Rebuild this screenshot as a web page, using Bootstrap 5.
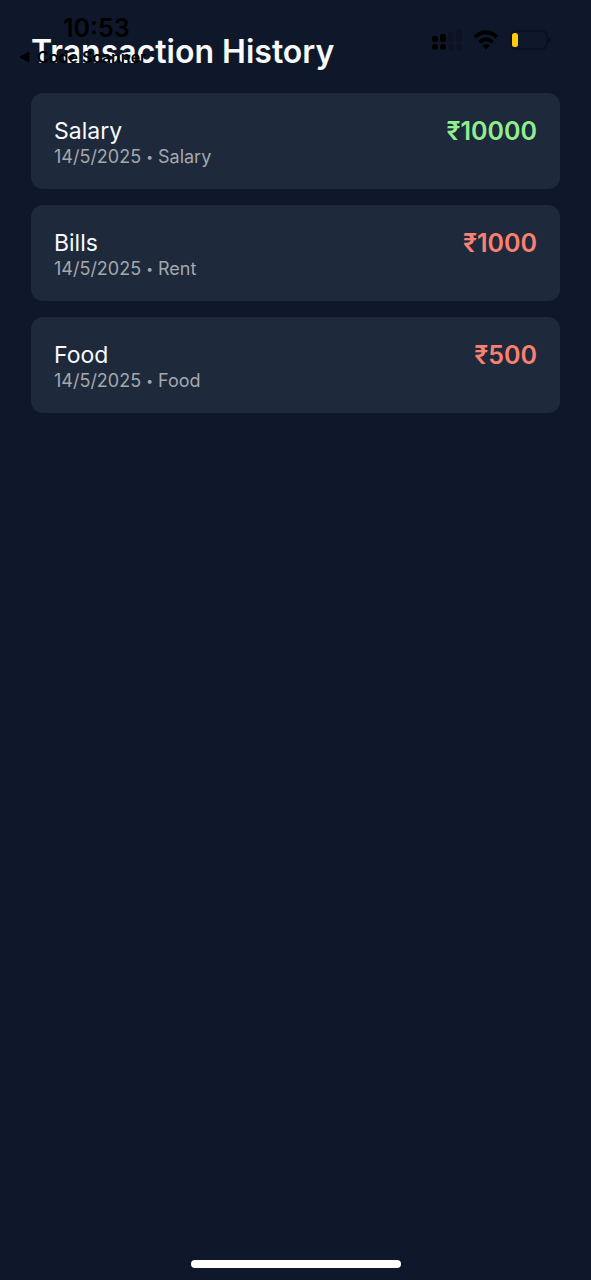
<!DOCTYPE html>
<html lang="en">
<head>
<meta charset="utf-8">
<meta name="viewport" content="width=device-width, initial-scale=1">
<title>Transaction History</title>
<link href="https://cdn.jsdelivr.net/npm/bootstrap@5.3.0/dist/css/bootstrap.min.css" rel="stylesheet">
<style>
  body { background: #0f172a; color: #f8fafc; font-family: Inter, "Noto Sans", sans-serif; }
  .screen { padding: 32px 31px 0; }
  .screen-title { font-size: 32px; line-height: 40px; font-weight: 600; margin-bottom: 21px; }
  .entry { background: #1e293b; border: 0; border-radius: 12px; color: inherit; padding: 24px 23px 20px; }
  .entry-name { font-size: 23px; line-height: 28px; }
  .entry-meta { font-size: 18px; line-height: 24px; color: #a4a8ae; }
  .dot { font-size: 12px; line-height: 1; vertical-align: 2px; }
  .amount { font-size: 25px; line-height: 28px; font-weight: 600; }
  .income { color: #90ee90; }
  .expense { color: #fa8072; }
  /* The translucent system bar lies over the page heading */
  .status-bar { height: 72px; color: #000; pointer-events: none; }
  .status-left { padding: 13px 0 0 19px; }
  .clock { font-size: 25px; line-height: 30px; font-weight: 600; padding-left: 44px; }
  .back-link { font-size: 16px; line-height: 28px; font-weight: 600; color: #000; text-decoration: none; gap: 7px; }
  .status-icons { padding: 25px 40px 0 0; gap: 11px; height: 54px; }
  .home-bar { width: 210px; height: 8px; background: #fff; }
</style>
</head>
<body class="position-relative min-vh-100 d-flex flex-column">
  <main class="screen flex-grow-1">
    <h1 class="screen-title">Transaction History</h1>
    <div class="d-flex flex-column gap-3">
      <article class="card entry flex-row justify-content-between align-items-start">
        <div><div class="entry-name">Salary</div><div class="entry-meta">14/5/2025 <span class="dot">•</span> Salary</div></div>
        <div class="amount income">₹10000</div>
      </article>
      <article class="card entry flex-row justify-content-between align-items-start">
        <div><div class="entry-name">Bills</div><div class="entry-meta">14/5/2025 <span class="dot">•</span> Rent</div></div>
        <div class="amount expense">₹1000</div>
      </article>
      <article class="card entry flex-row justify-content-between align-items-start">
        <div><div class="entry-name">Food</div><div class="entry-meta">14/5/2025 <span class="dot">•</span> Food</div></div>
        <div class="amount expense">₹500</div>
      </article>
    </div>
  </main>

  <div class="status-bar position-absolute top-0 start-0 w-100 d-flex justify-content-between align-items-start">
    <div class="status-left">
      <div class="clock">10:53</div>
      <a class="back-link d-flex align-items-center" href="#">
        <svg width="11" height="12" viewBox="0 0 11 12" aria-hidden="true"><path d="M10 1v10L1 6z" stroke="#000" stroke-linejoin="round"/></svg>
        <span>Code Scanner</span>
      </a>
    </div>
    <div class="status-icons d-flex align-items-center">
      <svg width="30" height="22" viewBox="0 0 30 22" aria-label="Signal">
        <g fill="#000"><rect x="0" y="7" width="6" height="6" rx="2"/><rect x="8" y="5" width="6" height="8" rx="2"/><rect x="0" y="15" width="6" height="6" rx="2.500"/><rect x="8" y="15" width="6" height="6" rx="2.500"/></g>
        <g fill="#0c1323"><rect x="16" y="3" width="6" height="10" rx="2"/><rect x="24" y="0" width="6" height="13" rx="2"/><rect x="16" y="15" width="6" height="6" rx="2.500"/><rect x="24" y="15" width="6" height="6" rx="2.500"/></g>
      </svg>
      <svg width="26" height="20" viewBox="0 0 26 20" fill="none" stroke="#000" aria-label="Wi-Fi">
        <path d="M2 7Q13-2.500 24 7" stroke-width="4"/>
        <path d="M6.500 12.200Q13 6.500 19.500 12.200" stroke-width="3.800"/>
        <path d="M9.200 15.500Q13 12.500 16.800 15.500L13 19.300z" fill="#000" stroke="none"/>
      </svg>
      <svg width="41" height="20" viewBox="0 0 41 20" aria-label="Battery low">
        <rect x="1" y="1" width="36" height="18" rx="5" fill="none" stroke="#090f1c" stroke-width="1.500"/>
        <path d="M38.500 7c3 1 3 5 0 6z" fill="#090f1c"/>
        <rect x="2" y="3" width="6" height="14" rx="2.500" fill="#ffcc0a"/>
      </svg>
    </div>
  </div>

  <div class="d-flex justify-content-center pb-2 mb-1">
    <div class="home-bar rounded-pill"></div>
  </div>
</body>
</html>
